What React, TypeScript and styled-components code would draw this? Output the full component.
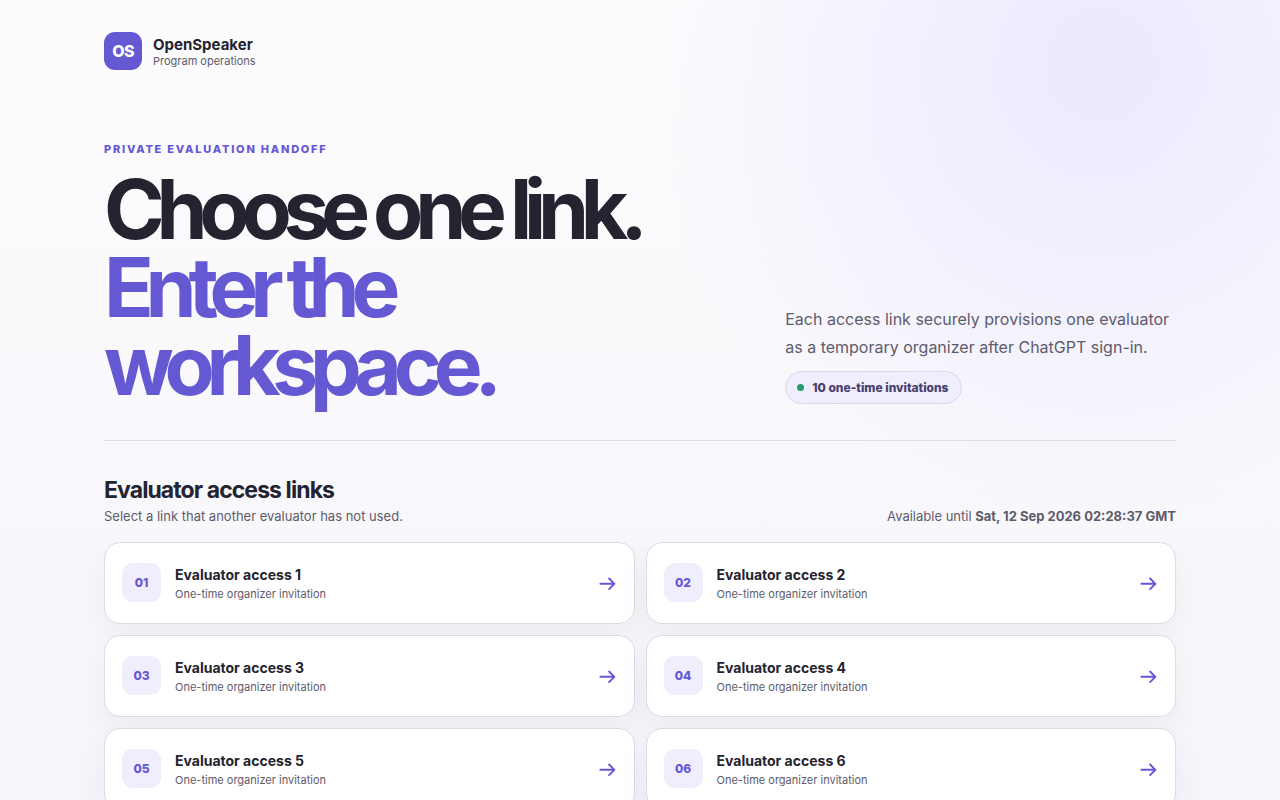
import React from "react";
import styled, { createGlobalStyle } from "styled-components";

const GlobalStyle = createGlobalStyle`
  *, *::before, *::after { box-sizing: border-box; }
  html { background: #f7f6fc; }
  body {
    margin: 0;
    min-height: 100vh;
    color: #242330;
    font-family: Inter, "Liberation Sans", sans-serif;
    background:
      radial-gradient(circle at 86% 64px, #ece8fe, rgba(236, 232, 254, 0) 456px),
      linear-gradient(180deg, #fcfcfd 0, #f6f5fb 800px);
  }
  h1, h2, p { margin: 0; }
`;

const Page = styled.div`
  width: min(1072px, 100% - 48px);
  margin: 0 auto;
  padding: 32px 0 64px;
`;

const Brand = styled.header`
  display: flex;
  align-items: center;
  gap: 11px;
`;

const BrandMark = styled.span`
  display: grid;
  place-items: center;
  width: 38px;
  height: 38px;
  border-radius: 11px;
  background: #6558d3;
  color: #fff;
  font-size: 16px;
  font-weight: 800;
  letter-spacing: -0.04em;
`;

const BrandText = styled.div`
  display: grid;
  padding-top: 2px;
`;

const BrandName = styled.strong`
  font-size: 15px;
  line-height: 18px;
  font-weight: 700;
`;

const BrandNote = styled.span`
  color: #5e5b6b;
  font-size: 11px;
  line-height: 14px;
`;

const Hero = styled.section`
  display: grid;
  grid-template-columns: minmax(0, 8fr) minmax(0, 5fr);
  gap: 56px;
  align-items: end;
  padding: 72px 0 35px;
  border-bottom: 1px solid #dcdae5;

  @media (max-width: 820px) {
    grid-template-columns: 1fr;
    gap: 28px;
  }
`;

const Eyebrow = styled.p`
  margin-bottom: 15px;
  color: #6558d3;
  font-size: 11px;
  line-height: 14px;
  font-weight: 800;
  letter-spacing: 0.16em;
  text-transform: uppercase;
`;

const Title = styled.h1`
  font-size: 82px;
  line-height: 78px;
  font-weight: 700;
  letter-spacing: -0.1em;

  span {
    display: block;
    color: #6558d3;
  }
`;

const Intro = styled.div`
  display: grid;
  justify-items: start;
  gap: 10px;
  padding-bottom: 1px;
`;

const Lead = styled.p`
  color: #5e5b6b;
  font-size: 16px;
  line-height: 28px;
`;

const Pill = styled.span`
  display: inline-flex;
  align-items: center;
  gap: 8px;
  padding: 8px 12px 8px 11px;
  border: 1px solid #dad6ee;
  border-radius: 999px;
  background: #f0edfc;
  color: #48406f;
  font-size: 12px;
  line-height: 15px;
  font-weight: 800;

  &::before {
    content: "";
    width: 7px;
    height: 7px;
    border-radius: 50%;
    background: #249b6c;
  }
`;

const ListHead = styled.div`
  display: flex;
  align-items: flex-end;
  justify-content: space-between;
  gap: 24px;
  padding: 35px 0 18px;
`;

const ListTitle = styled.h2`
  font-size: 23px;
  line-height: 28px;
  font-weight: 700;
  letter-spacing: -0.04em;
`;

const Note = styled.p`
  color: #5e5b6b;
  font-size: 13px;
  line-height: 16px;
`;

const ListNote = styled(Note)`
  margin-top: 4px;
`;

const Grid = styled.nav`
  display: grid;
  grid-template-columns: repeat(2, minmax(0, 1fr));
  gap: 11px;

  @media (max-width: 680px) {
    grid-template-columns: 1fr;
  }
`;

const Card = styled.a`
  display: grid;
  grid-template-columns: auto 1fr auto;
  align-items: center;
  gap: 14px;
  padding: 20px 17px 21px;
  border: 1px solid #dcdae5;
  border-radius: 16px;
  background: #fff;
  color: inherit;
  text-decoration: none;
  box-shadow: 0 12px 32px rgba(36, 35, 48, 0.05);
`;

const Index = styled.span`
  display: grid;
  place-items: center;
  width: 39px;
  height: 39px;
  border-radius: 11px;
  background: #f0edfc;
  color: #6558d3;
  font-size: 12px;
  font-weight: 800;
`;

const CardText = styled.span`
  display: grid;
  gap: 4px;
  padding-top: 1px;
`;

const CardTitle = styled.strong`
  font-size: 14px;
  line-height: 17px;
  font-weight: 700;
`;

const CardNote = styled.span`
  color: #5e5b6b;
  font-size: 11px;
  line-height: 14px;
`;

const ArrowIcon = styled.svg`
  width: 20px;
  height: 20px;
  fill: none;
  stroke: #6558d3;
  stroke-width: 1.9;
  stroke-linecap: round;
  stroke-linejoin: round;
`;

const invitations = Array.from({ length: 10 }, (_, i) => i + 1);

export default function App() {
  return (
    <>
      <GlobalStyle />
      <Page>
        <Brand>
          <BrandMark>OS</BrandMark>
          <BrandText>
            <BrandName>OpenSpeaker</BrandName>
            <BrandNote>Program operations</BrandNote>
          </BrandText>
        </Brand>
        <main>
          <Hero>
            <div>
              <Eyebrow>Private evaluation handoff</Eyebrow>
              <Title>
                Choose one link.
                <span>Enter the workspace.</span>
              </Title>
            </div>
            <Intro>
              <Lead>
                Each access link securely provisions one evaluator as a
                temporary organizer after ChatGPT sign-in.
              </Lead>
              <Pill>10 one-time invitations</Pill>
            </Intro>
          </Hero>
          <section aria-labelledby="links-title">
            <ListHead>
              <div>
                <ListTitle id="links-title">Evaluator access links</ListTitle>
                <ListNote>
                  Select a link that another evaluator has not used.
                </ListNote>
              </div>
              <Note>
                Available until <strong>Sat, 12 Sep 2026 02:28:37 GMT</strong>
              </Note>
            </ListHead>
            <Grid aria-label="Evaluator invitations">
              {invitations.map((n) => (
                <Card key={n} href={`#access-${n}`}>
                  <Index>{String(n).padStart(2, "0")}</Index>
                  <CardText>
                    <CardTitle>Evaluator access {n}</CardTitle>
                    <CardNote>One-time organizer invitation</CardNote>
                  </CardText>
                  <ArrowIcon viewBox="0 0 20 20" aria-hidden="true">
                    <path d="M3.4 10.8h14M12.1 5.5l5.3 5.3-5.3 5.3" />
                  </ArrowIcon>
                </Card>
              ))}
            </Grid>
          </section>
        </main>
      </Page>
    </>
  );
}
